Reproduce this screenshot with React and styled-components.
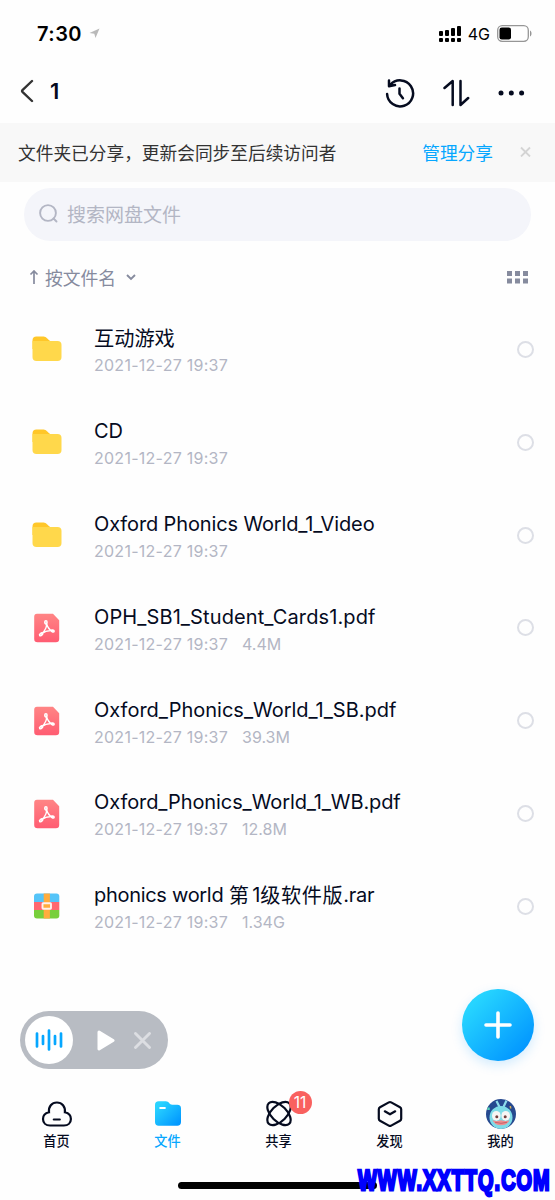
import React from "react";
import styled, { createGlobalStyle } from "styled-components";

const ink = "#050b1f";
const muted = "#b3b6c4";
const slate = "#868b9e";
const blue = "#06a7ff";

const GlobalStyle = createGlobalStyle`
  * { box-sizing: border-box; }
  body { margin: 0; background: #fefefe; }
  svg { display: block; flex: none; }
`;

const Screen = styled.div`
  position: relative;
  width: 555px;
  height: 1200px;
  overflow: hidden;
  display: flex;
  flex-direction: column;
  background: #fefefe;
  color: ${ink};
  font-family: Inter, "Noto Sans CJK SC", sans-serif;
`;

const StatusBar = styled.header`
  height: 67px;
  padding: 0 23px 0 37px;
  display: flex;
  align-items: center;
  color: #000;
`;

const Clock = styled.span`
  font-size: 20px;
  font-weight: 600;
  line-height: 24px;
  letter-spacing: 0.45px;
  margin-right: 7px;
`;

const StatusRight = styled.div`
  margin-left: auto;
  display: flex;
  align-items: center;
`;

const Network = styled.span`
  font-size: 16px;
  line-height: 20px;
  margin: 0 7px 0 6px;
`;

const NavBar = styled.nav`
  height: 56px;
  padding: 0 30px 9px 20px;
  display: flex;
  align-items: center;
`;

const Title = styled.h1`
  margin: 0 0 0 16px;
  font-size: 22px;
  line-height: 28px;
  font-weight: 600;
`;

const NavActions = styled.div`
  margin-left: auto;
  padding-top: 5px;
  display: flex;
  align-items: center;
  gap: 28px;
`;

const Banner = styled.section`
  height: 59px;
  padding: 0 24px 2px 18px;
  display: flex;
  align-items: center;
  background: #f8f8f8;
  color: #333;
  font-family: "Noto Sans CJK SC", sans-serif;
  font-size: 17.7px;
  line-height: 26px;
`;

const BannerLink = styled.a`
  margin: 0 27px 0 auto;
  color: ${blue};
`;

const SearchBox = styled.div`
  height: 53px;
  margin: 6px 24px 0 24px;
  padding: 0 15px 2px;
  display: flex;
  align-items: center;
  gap: 9px;
  border-radius: 27px;
  background: #f4f5fa;
  color: ${muted};
  font-family: "Noto Sans CJK SC", sans-serif;
  font-size: 19px;
  line-height: 28px;
`;

const SortBar = styled.div`
  height: 62px;
  padding: 10px 27px 0 29px;
  display: flex;
  align-items: center;
  color: ${slate};
  font-family: "Noto Sans CJK SC", sans-serif;
  font-size: 17.8px;
  line-height: 26px;
`;

const SortLabel = styled.span`
  margin: -1px 10px 0 6px;
`;

const Spacer = styled.span`
  flex: 1;
`;

const FileList = styled.ul`
  margin: 0;
  padding: 0;
  list-style: none;
`;

const FileRow = styled.li`
  height: 92.83px;
  padding: 0 21px 0 32px;
  display: flex;
  align-items: center;
`;

const FileIcon = styled.span`
  width: 62px;
  flex: none;
`;

const FileText = styled.div`
  flex: 1;
  padding-top: 4.6px;
`;

const FileName = styled.div`
  height: 27px;
  font-size: 20px;
  line-height: 27px;
  letter-spacing: ${(p) => p.$tracking || 0}px;
  white-space: pre;
`;

const Hanzi = styled.span`
  font-size: 20.2px;
  line-height: 1;
  letter-spacing: ${(p) => p.$tracking || 0}px;
  vertical-align: -1px;
`;

const FileMeta = styled.div`
  display: flex;
  gap: 14px;
  color: ${muted};
  font-size: 16px;
  line-height: 26px;
  letter-spacing: 0.26px;
`;

const FileSize = styled.span`
  letter-spacing: 0;
`;

const Radio = styled.span`
  width: 17px;
  height: 17px;
  border: 2px solid #dddfe6;
  border-radius: 50%;
`;

const Player = styled.div`
  position: absolute;
  left: 20px;
  top: 1011px;
  width: 148px;
  height: 58px;
  padding: 0 17px 0 5px;
  display: flex;
  align-items: center;
  border-radius: 29px;
  background: #b8bcc3;
`;

const PlayerDisc = styled.span`
  width: 48px;
  height: 48px;
  margin-right: 24px;
  display: grid;
  place-items: center;
  border-radius: 50%;
  background: #fff;
`;

const AddButton = styled.button`
  position: absolute;
  left: 462px;
  top: 989px;
  width: 72px;
  height: 72px;
  padding: 0;
  border: 0;
  display: grid;
  place-items: center;
  border-radius: 50%;
  background: linear-gradient(135deg, #26d4ff 18%, #0398ff 85%);
  box-shadow: 0 4px 12px rgba(6, 150, 255, 0.18);
`;

const TabBar = styled.nav`
  margin-top: auto;
  height: 108px;
  padding: 5px 0 0 1px;
  display: grid;
  grid-template-columns: repeat(5, 111px);
`;

const Tab = styled.a`
  display: flex;
  flex-direction: column;
  align-items: center;
  color: ${(p) => (p.$active ? blue : ink)};
  font-family: "Noto Sans CJK SC", sans-serif;
  font-size: 13.2px;
  font-weight: 500;
  line-height: 20px;
`;

const TabIcon = styled.span`
  position: relative;
  height: 34px;
  display: grid;
  place-items: center;
`;

const Badge = styled.span`
  position: absolute;
  left: 24px;
  top: -6px;
  width: 23px;
  height: 23px;
  border-radius: 50%;
  background: #f9615f;
  color: #fff;
  font: 400 15.5px/23px Inter, sans-serif;
  text-align: center;
`;

const HomeIndicator = styled.div`
  position: absolute;
  left: 178px;
  top: 1182px;
  width: 199px;
  height: 7px;
  border-radius: 4px;
  background: #000;
`;

const Watermark = styled.div`
  position: absolute;
  left: 358px;
  top: 1160px;
  color: #0000fe;
  font-family: "Liberation Sans Narrow", "Liberation Sans", sans-serif;
  font-size: 24px;
  font-weight: 700;
  line-height: 40px;
  letter-spacing: 1.25px;
  white-space: nowrap;
  -webkit-text-stroke: 2.2px #0000fe;
  transform: scale(0.83, 1.25);
  transform-origin: 0 50%;
`;

const FolderIcon = () => (
  <svg width="30" height="28" viewBox="0 0 30 28">
    <path d="M.5 5.5a4 4 0 0 1 4-4h7c3 0 4 3 6.500 4.300V14H.5z" fill="#ffc729" />
    <path d="M.5 6h25a4 4 0 0 1 4 4v12a4 4 0 0 1-4 4h-21a4 4 0 0 1-4-4z" fill="#ffd84b" />
  </svg>
);

const PdfIcon = () => (
  <svg width="30" height="30" viewBox="0 0 30 30">
    <defs>
      <linearGradient id="pdf" x1="0" y1="0" x2="0" y2="1">
        <stop offset="0" stopColor="#ff8585" />
        <stop offset="1" stopColor="#ff5c72" />
      </linearGradient>
    </defs>
    <path d="M5 .8h16l6.200 6.400v18.800a3.300 3.300 0 0 1-3.300 3.300h-18.400a3.300 3.300 0 0 1-3.300-3.300V3.800a3 3 0 0 1 2.800-3z" fill="url(#pdf)" />
    <g fill="none" stroke="#fff" strokeWidth="1.400" strokeLinecap="round">
      <path d="M14.300 10.500q1.200 4.500-4.500 10.300M14.500 10.500q1.500 5.500 5.500 7.500M10 20.500q4-3.300 10.500-2.800" />
      <ellipse cx="13.900" cy="9.300" rx="1.200" ry="1.700" fill="#fff" fillOpacity=".5" />
      <ellipse cx="9.100" cy="21.300" rx="1.900" ry="1.100" transform="rotate(-40 9.100 21.300)" fill="#fff" fillOpacity=".6" />
      <ellipse cx="20.700" cy="18" rx="1.500" ry="1" transform="rotate(10 20.700 18)" fill="#fff" fillOpacity=".6" />
    </g>
  </svg>
);

const ArchiveIcon = () => (
  <svg width="30" height="26" viewBox="0 0 30 26">
    <clipPath id="archive"><rect x="2" y=".5" width="25.300" height="25" rx="3" /></clipPath>
    <g clipPath="url(#archive)">
      <path fill="#55c4f8" d="M2 0h26v9H2z" />
      <path fill="#ff6870" d="M2 9h26v8H2z" />
      <path fill="#78cf3b" d="M2 17h26v9H2z" />
      <path fill="#ffac3d" d="M11.700 0h6.200v26h-6.200z" />
      <rect x="10.500" y="10.300" width="8.500" height="5.400" rx=".6" fill="#ffac3d" stroke="#fff1ee" strokeWidth="1.900" />
    </g>
  </svg>
);

const icons = { folder: FolderIcon, pdf: PdfIcon, archive: ArchiveIcon };

const files = [
  { id: 1, type: "folder", name: <Hanzi>互动游戏</Hanzi> },
  { id: 2, type: "folder", name: "CD", tracking: -0.2 },
  { id: 3, type: "folder", name: "Oxford Phonics World_1_Video", tracking: -0.13 },
  { id: 4, type: "pdf", name: "OPH_SB1_Student_Cards1.pdf", size: "4.4M", tracking: 0.11 },
  { id: 5, type: "pdf", name: "Oxford_Phonics_World_1_SB.pdf", size: "39.3M" },
  { id: 6, type: "pdf", name: "Oxford_Phonics_World_1_WB.pdf", size: "12.8M", tracking: -0.09 },
  {
    id: 7,
    type: "archive",
    name: <>phonics world <Hanzi $tracking={3.4}>第</Hanzi>1<Hanzi $tracking={0.6}>级软件版</Hanzi>.rar</>,
    size: "1.34G",
    tracking: -0.3,
  },
];

const HomeIcon = () => (
  <svg width="32" height="28" viewBox="0 0 32 28" fill="none" stroke={ink} strokeWidth="2.200" strokeLinecap="round">
    <path d="M8 12.300C7.300 6.500 10.800 2.500 15.900 2.500s8.600 4 8 9.800c3.600.9 6 3.300 6 6.600 0 4-3 6.600-7 6.600H9c-4 0-7-2.600-7-6.600 0-3.300 2.400-5.700 6-6.600z" />
    <path d="M12.800 19.500h6" />
  </svg>
);

const FilesIcon = () => (
  <svg width="28" height="28" viewBox="0 0 28 28">
    <defs>
      <linearGradient id="files" x1="0" y1="0" x2="1" y2="1">
        <stop offset=".15" stopColor="#29d3ff" />
        <stop offset=".9" stopColor="#0298ff" />
      </linearGradient>
    </defs>
    <path d="M1 5a3.700 3.700 0 0 1 3.700-3.700h7.200c3 0 3.600 3.500 6.300 3.500h5.100A3.700 3.700 0 0 1 27 8.500V22a3.700 3.700 0 0 1-3.700 3.700H4.700A3.700 3.700 0 0 1 1 22z" fill="url(#files)" />
    <path d="M6.300 8h4.500" stroke="#fff" strokeWidth="2.200" strokeLinecap="round" />
  </svg>
);

const ShareIcon = () => (
  <svg width="28" height="28" viewBox="0 0 28 28" fill="none" stroke={ink} strokeWidth="2.200">
    <ellipse cx="14" cy="13.500" rx="14.500" ry="7.800" transform="rotate(45 14 13.500)" />
    <ellipse cx="14" cy="13.500" rx="14.500" ry="7.800" transform="rotate(-45 14 13.500)" />
  </svg>
);

const DiscoverIcon = () => (
  <svg width="28" height="28" viewBox="0 0 28 28" fill="none" stroke={ink} strokeWidth="2.200" strokeLinejoin="round" strokeLinecap="round">
    <path d="M12.800 2.400q1.200-.7 2.400 0l8.800 4.900q1.200.7 1.200 2v9.400q0 1.300-1.200 2l-8.800 4.900q-1.200.7-2.400 0L4 20.700q-1.200-.7-1.200-2V9.300q0-1.300 1.200-2z" />
    <path d="M8.800 11.300l5.200 3 5.200-3" />
  </svg>
);

const AvatarIcon = () => (
  <svg width="30" height="30" viewBox="0 0 30 30">
    <clipPath id="avatar"><circle cx="15" cy="15" r="15" /></clipPath>
    <g clipPath="url(#avatar)">
      <path fill="#26498f" d="M0 0h30v30H0z" />
      <path d="M10.500 2l3.500 7M20.500 1.500l-3.500 7.500" stroke="#8fdcea" strokeWidth="2.200" />
      <circle cx="15" cy="18.500" r="11.500" fill="#7edce7" />
      <ellipse cx="10.300" cy="16.800" rx="4.300" ry="4.900" fill="#f7f5f3" />
      <ellipse cx="19.700" cy="16.800" rx="4.300" ry="4.900" fill="#f7f5f3" />
      <circle cx="10.800" cy="17.700" r="1.500" fill="#713f3e" />
      <circle cx="19.200" cy="17.700" r="1.500" fill="#713f3e" />
      <path d="M6.500 21.300q4 1.500 8.500 0 4.500 1.500 8.500 0-2 5-8.500 5t-8.500-5z" fill="#ec8f90" />
      <path d="M9 23.300q6 2 12 0" fill="none" stroke="#bd5660" strokeWidth=".8" />
      <path d="M24.300 7l.4 2.500" stroke="#d7b15a" strokeWidth="1.500" />
      <path d="M2.500 8.500v2.500" stroke="#59d1b8" strokeWidth="2.500" />
    </g>
  </svg>
);

const tabs = [
  { label: "首页", Icon: HomeIcon },
  { label: "文件", Icon: FilesIcon, active: true },
  { label: "共享", Icon: ShareIcon, badge: "11" },
  { label: "发现", Icon: DiscoverIcon },
  { label: "我的", Icon: AvatarIcon },
];

export default function App() {
  return (
    <Screen>
      <GlobalStyle />
      <StatusBar>
        <Clock>7:30</Clock>
        <svg width="11" height="11" viewBox="0 0 11 11"><path d="M.5 5L10.500.5 6.500 10 5.300 5.700z" fill="#b9b9b9" /></svg>
        <StatusRight>
          <svg width="23" height="18" viewBox="0 0 23 18">
            <rect x="0" y="6" width="4" height="5" rx="1" />
            <rect x="6" y="5" width="4" height="6" rx="1" />
            <rect x="12" y="3" width="4" height="8" rx="1" />
            <rect x="18" y="1" width="4" height="10" rx="1" />
            <rect x="0" y="13" width="4" height="4" rx="1" />
            <rect x="6" y="13" width="4" height="4" rx="1" />
            <rect x="12" y="13" width="4" height="4" rx="1" />
            <rect x="18" y="13" width="4" height="4" rx="1" />
          </svg>
          <Network>4G</Network>
          <svg width="35" height="17" viewBox="0 0 35 17">
            <rect x=".7" y=".7" width="30.600" height="15.600" rx="4.500" fill="none" stroke="#969696" strokeWidth="1.300" />
            <rect x="2.500" y="2.500" width="11.500" height="12" rx="2.300" />
            <path d="M33 5.500c2 1 2 5 0 6z" fill="#969696" />
          </svg>
        </StatusRight>
      </StatusBar>

      <NavBar>
        <svg width="14" height="24" viewBox="0 0 14 24" fill="none" stroke="#333" strokeWidth="2.400" strokeLinecap="round" strokeLinejoin="round"><path d="M12 2L2.700 10.800q-1.200 1.200 0 2.400L12 22" /></svg>
        <Title>1</Title>
        <NavActions>
          <svg width="30" height="30" viewBox="0 0 30 30" fill="none" stroke={ink} strokeWidth="2.500" strokeLinecap="round" strokeLinejoin="round">
            <path d="M2.100 16a13 13 0 1 0 3.200-9.200M4 2.500v5.800l6-1.200M14.500 10.500v5.300l3.400 4.400" />
          </svg>
          <svg width="27" height="28" viewBox="0 0 27 28" fill="none" stroke={ink} strokeWidth="2.500" strokeLinecap="round" strokeLinejoin="round">
            <path d="M1.500 9L9.700 2v24M17.500 2v24l7.700-7" />
          </svg>
          <svg width="27" height="6" viewBox="0 0 27 6" fill={ink}><circle cx="3" cy="3" r="2.500" /><circle cx="13.300" cy="3" r="2.500" /><circle cx="23.600" cy="3" r="2.500" /></svg>
        </NavActions>
      </NavBar>

      <Banner>
        <span>文件夹已分享，更新会同步至后续访问者</span>
        <BannerLink>管理分享</BannerLink>
        <svg width="11" height="11" viewBox="0 0 11 11" stroke="#d4d4d4" strokeWidth="1.800"><path d="M1 1.500l9 9M10 1.500l-9 9" /></svg>
      </Banner>

      <SearchBox>
        <svg width="19" height="19" viewBox="0 0 19 19" fill="none" stroke={muted} strokeWidth="1.900" strokeLinecap="round"><circle cx="9" cy="9" r="7.900" /><path d="M14.500 14.500l3 3" /></svg>
        <span>搜索网盘文件</span>
      </SearchBox>

      <SortBar>
        <svg width="10" height="15" viewBox="0 0 10 15" fill="none" stroke={slate} strokeWidth="1.700"><path d="M5 14V1M1.500 4.500L5 1l3.500 3.500" /></svg>
        <SortLabel>按文件名</SortLabel>
        <svg width="10" height="7" viewBox="0 0 10 7" fill="none" stroke={slate} strokeWidth="1.900"><path d="M1 1l4 4 4-4" /></svg>
        <Spacer />
        <svg width="21" height="13" viewBox="0 0 21 13" fill={slate}>
          <path d="M0 0h5v5H0zM8 0h5v5H8zM16 0h5v5h-5zM0 7.500h5v5H0zM8 7.500h5v5H8zM16 7.500h5v5h-5z" />
        </svg>
      </SortBar>

      <FileList>
        {files.map((file) => {
          const Icon = icons[file.type];
          return (
            <FileRow key={file.id}>
              <FileIcon><Icon /></FileIcon>
              <FileText>
                <FileName $tracking={file.tracking}>{file.name}</FileName>
                <FileMeta><span>2021-12-27 19:37</span>{file.size && <FileSize>{file.size}</FileSize>}</FileMeta>
              </FileText>
              <Radio />
            </FileRow>
          );
        })}
      </FileList>

      <TabBar>
        {tabs.map(({ label, Icon, active, badge }) => (
          <Tab key={label} $active={active}>
            <TabIcon><Icon />{badge && <Badge>{badge}</Badge>}</TabIcon>
            <span>{label}</span>
          </Tab>
        ))}
      </TabBar>

      <Player>
        <PlayerDisc>
          <svg width="28" height="22" viewBox="0 0 28 22" stroke={blue} strokeWidth="2.700" strokeLinecap="round"><path d="M2 4.500v13M8 7v8M14 1.500v19M20 7v8M26 4.500v13" /></svg>
        </PlayerDisc>
        <svg width="18" height="21" viewBox="0 0 18 21"><path d="M2 2l14 8.500L2 19z" fill="#fff" stroke="#fff" strokeWidth="3" strokeLinejoin="round" /></svg>
        <Spacer />
        <svg width="17" height="17" viewBox="0 0 17 17" stroke="#dcdee2" strokeWidth="2.900" strokeLinecap="round"><path d="M1.500 1.500l14 14M15.500 1.500l-14 14" /></svg>
      </Player>
      <AddButton>
        <svg width="28" height="28" viewBox="0 0 28 28" stroke="#fff" strokeWidth="3.600" strokeLinecap="round"><path d="M14 2v24M2 14h24" /></svg>
      </AddButton>
      <HomeIndicator />
      <Watermark>WWW.XXTTQ.COM</Watermark>
    </Screen>
  );
}
